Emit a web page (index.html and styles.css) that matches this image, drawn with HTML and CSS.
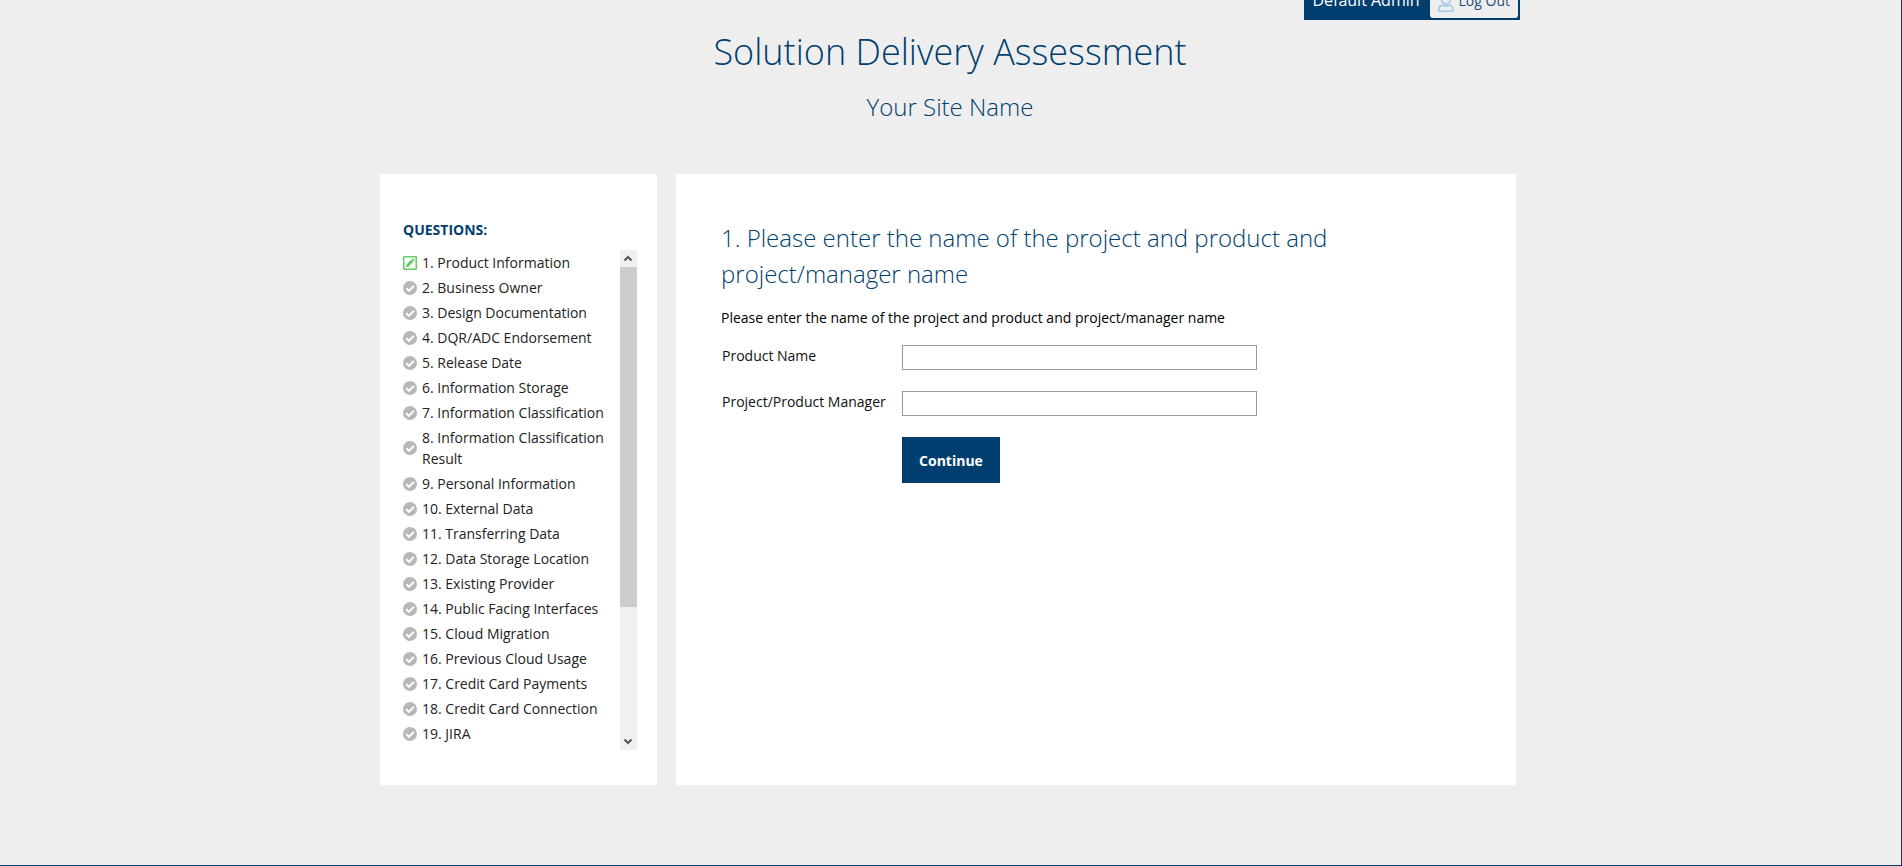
FILE: index.html
```
<!DOCTYPE html>
<html lang="en">
<head>
<meta charset="utf-8">
<title>Solution Delivery Assessment</title>
<link rel="stylesheet" href="styles.css">
</head>
<body>
<svg class="sprite" aria-hidden="true">
  <symbol id="check" viewBox="0 0 14 14"><circle cx="7" cy="7" r="7" fill="#b8b8b8"/><path d="M3.2 7.2 6 9.8 10.8 4.9" fill="none" stroke="#fff" stroke-width="2"/></symbol>
  <symbol id="edit" viewBox="0 0 14 14"><rect x=".75" y=".75" width="12.5" height="12.5" rx=".6" fill="#fff" stroke="#6c6" stroke-width="1.5"/><path d="M3 11l.6-2.600 4.800-4.800 2 2-4.800 4.800zM8.900 3.200l.7-.7q.4-.3.800 0l1.100 1.100q.4.400 0 .800l-.7.700z" fill="#5c5"/></symbol>
</svg>
<div class="page">
  <header class="header">
    <div class="userbar">
      <span class="user">Default Admin</span>
      <button class="logout" type="button">
        <svg class="person" viewBox="0 0 16 18" fill="none" stroke="#9fc5e8" stroke-width="1.500" aria-hidden="true"><circle cx="8" cy="5.500" r="4.500"/><path d="M5 11.200C2.500 11.200.8 13 .8 15.200v.8q0 1.200 1.200 1.200h12q1.200 0 1.200-1.200v-.8c0-2.200-1.700-4-4.200-4-2 .9-4 .9-6 0z"/></svg>
        Log Out
      </button>
    </div>
    <h1 class="title">Solution Delivery Assessment</h1>
    <p class="site">Your Site Name</p>
  </header>
  <div class="columns">
    <nav class="sidebar">
      <h2 class="sidebar-title">QUESTIONS:</h2>
      <div class="scroller">
        <ul class="list">
          <li class="item"><svg class="icon"><use href="#edit"/></svg><span>1. Product Information</span></li>
          <li class="item"><svg class="icon"><use href="#check"/></svg><span>2. Business Owner</span></li>
          <li class="item"><svg class="icon"><use href="#check"/></svg><span>3. Design Documentation</span></li>
          <li class="item"><svg class="icon"><use href="#check"/></svg><span>4. DQR/ADC Endorsement</span></li>
          <li class="item"><svg class="icon"><use href="#check"/></svg><span>5. Release Date</span></li>
          <li class="item"><svg class="icon"><use href="#check"/></svg><span>6. Information Storage</span></li>
          <li class="item"><svg class="icon"><use href="#check"/></svg><span>7. Information Classification</span></li>
          <li class="item"><svg class="icon"><use href="#check"/></svg><span>8. Information Classification Result</span></li>
          <li class="item"><svg class="icon"><use href="#check"/></svg><span>9. Personal Information</span></li>
          <li class="item"><svg class="icon"><use href="#check"/></svg><span>10. External Data</span></li>
          <li class="item"><svg class="icon"><use href="#check"/></svg><span>11. Transferring Data</span></li>
          <li class="item"><svg class="icon"><use href="#check"/></svg><span>12. Data Storage Location</span></li>
          <li class="item"><svg class="icon"><use href="#check"/></svg><span>13. Existing Provider</span></li>
          <li class="item"><svg class="icon"><use href="#check"/></svg><span>14. Public Facing Interfaces</span></li>
          <li class="item"><svg class="icon"><use href="#check"/></svg><span>15. Cloud Migration</span></li>
          <li class="item"><svg class="icon"><use href="#check"/></svg><span>16. Previous Cloud Usage</span></li>
          <li class="item"><svg class="icon"><use href="#check"/></svg><span>17. Credit Card Payments</span></li>
          <li class="item"><svg class="icon"><use href="#check"/></svg><span>18. Credit Card Connection</span></li>
          <li class="item"><svg class="icon"><use href="#check"/></svg><span>19. JIRA</span></li>
        </ul>
        <div class="bar" aria-hidden="true">
          <svg class="arrow" viewBox="0 0 17 17"><path d="M4.500 10.500 8 7l3.500 3.500" fill="none" stroke="#555" stroke-width="2"/></svg>
          <div class="track"><div class="thumb"></div></div>
          <svg class="arrow" viewBox="0 0 17 17"><path d="M4.500 6.500 8 10l3.500-3.500" fill="none" stroke="#555" stroke-width="2"/></svg>
        </div>
      </div>
    </nav>
    <main class="main">
      <h2 class="question">1. Please enter the name of the project and product and project/manager name</h2>
      <p class="help">Please enter the name of the project and product and project/manager name</p>
      <form class="form">
        <label class="label" for="product">Product Name</label>
        <input class="input" id="product" type="text">
        <label class="label" for="manager">Project/Product Manager</label>
        <input class="input" id="manager" type="text">
        <button class="continue" type="button">Continue</button>
      </form>
    </main>
  </div>
</div>
</body>
</html>
```
FILE: styles.css
```
* { box-sizing: border-box; }
body {
  display: flow-root;
  margin: 0;
  padding-right: 1px;
  min-height: 100vh;
  border: solid #003e6f;
  border-width: 0 1px 1px 0;
  background: #eee;
  color: #111;
  font: 14px/21px "Open Sans", "Noto Sans", sans-serif;
}
.sprite { display: none; }
.page { max-width: 1140px; margin: 0 auto; }
.header { text-align: center; color: #003e6f; }
.userbar {
  display: flex;
  align-items: center;
  width: max-content;
  height: 40px;
  margin: -20px 0 0 auto;
  padding: 2px 2px 2px 8px;
  gap: 10px;
  background: #003e6f;
  color: #fff;
  font-size: 16px;
}
.logout {
  display: flex;
  align-items: center;
  gap: 5px;
  height: 36px;
  padding: 0 8px;
  border: 0;
  border-radius: 3px;
  background: #eee;
  color: #1f4e79;
  font: inherit;
  font-size: 14px;
}
.person { width: 16px; height: 18px; margin-top: 6px; }
.title { margin: 5px 0 0; font-size: 36px; font-weight: 300; line-height: 54px; }
.site { margin: 10px 0 0; font-size: 24px; font-weight: 300; line-height: 36px; }
.columns { display: flex; gap: 19px; margin: 49px 4px 0 0; }
.sidebar { flex: 0 0 277px; padding: 45px 20px 35px 23px; background: #fff; }
.sidebar-title { margin: 0 0 10px; color: #003e6f; font-size: 14px; font-weight: 700; line-height: 21px; }
.scroller { display: flex; height: 500px; }
.list { flex: 1; margin: 0; padding: 2px 12px 0 0; list-style: none; overflow: hidden; color: #222; }
.item { display: flex; align-items: center; gap: 5px; margin-bottom: 4px; }
.icon { flex: none; width: 14px; height: 14px; }
.bar { display: flex; flex-direction: column; width: 17px; background: #f0f0f0; }
.arrow { width: 17px; height: 17px; }
.track { flex: 1; }
.thumb { height: 73%; background: #cdcdcd; }
.main { flex: 1; padding: 46px 45px; background: #fff; }
.question { margin: 0; color: #003e6f; font-size: 24px; font-weight: 300; line-height: 36px; }
.help { margin: 15px 0 17px; color: #000; }
.form { display: grid; grid-template-columns: 181px 355px; gap: 21px 0; }
.label { padding-left: 1px; }
.input { height: 25px; padding: 2px 4px; border: 1px solid #999; background: #fff; font: inherit; }
.continue {
  grid-column: 2;
  justify-self: start;
  width: 98px;
  height: 46px;
  padding: 0;
  border: 0;
  background: #003e6f;
  color: #fff;
  font: inherit;
  font-weight: 700;
}
```
